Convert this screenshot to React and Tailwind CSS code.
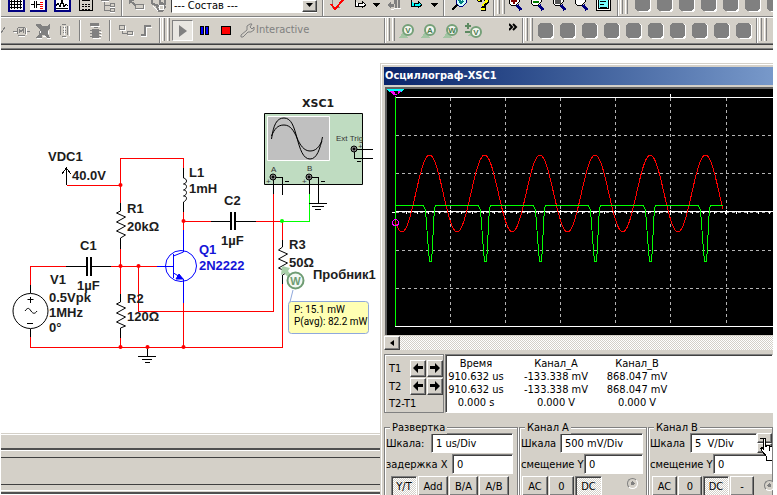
import { useState } from "react";

const raised = "border border-t-white border-l-white border-r-[#404040] border-b-[#404040] bg-[#d4d0c8] shadow-[inset_-1px_-1px_0_#808080]";
const sunken = "border border-t-[#808080] border-l-[#808080] border-r-white border-b-white shadow-[inset_1px_1px_0_#404040]";
const dither = "bg-[repeating-conic-gradient(#ffffff_0_25%,#d4d0c8_0_50%)] bg-[length:2px_2px]";

function Icon({ w = 16, className = "", children }) {
  return (
    <svg width={w} height="16" viewBox={`0 0 ${w} 16`} shapeRendering="crispEdges" fill="none" className={`shrink-0 ${className}`}>
      {children}
    </svg>
  );
}

function Separator({ className = "" }) {
  return <div className={`w-[2px] shrink-0 self-stretch border-l border-[#808080] bg-white ${className}`} />;
}

function Grip({ className = "" }) {
  return (
    <div className={`flex shrink-0 gap-[2px] self-stretch pb-[2px] ${className}`}>
      <div className="w-[3px] border-x border-l-white border-r-[#808080]" />
      <div className="w-[3px] border-x border-l-white border-r-[#808080]" />
    </div>
  );
}

function Blank({ cut }) {
  return (
    <Icon>
      <g transform={cut ? "translate(0 -4)" : ""}>
        <path d="M3 1h11l2 2v11l-2 2H4z" fill="#fff" />
        <path d="M2 0h11v1h1v1h1v11h-1v1h-1v1H2v-1H1v-1H0V2h1V1h1z" fill="#808080" />
      </g>
    </Icon>
  );
}

function Lens({ sign, color = "#800000" }) {
  return (
    <Icon>
      <path d="M1 0v3l2 2h5l3-3V0" fill="#fff" stroke="#000" />
      <path d="M9 5l4 5" stroke="#000080" strokeWidth="3" />
      <path d={sign} stroke={color} strokeWidth="2" />
    </Icon>
  );
}

function ProbeIcon({ letter }) {
  return (
    <Icon w={17}>
      <path d="M5 8L0 15h9z" fill="#a3c5a3" />
      <circle cx="9" cy="7" r="5" fill="#f4f6f0" stroke="#75a078" strokeWidth="2" shapeRendering="auto" />
      <text x="9" y="10" textAnchor="middle" className="fill-[#4a7a4e] font-['Liberation_Sans'] text-[8px] font-bold">{letter}</text>
    </Icon>
  );
}

function UpperToolbar() {
  return (
    <div className="flex h-[16px] items-start overflow-hidden">
      <Icon w={18} className="ml-[6px]">
        <path d="M1 0h16v11H1z" fill="#fff" />
        <path d="M1.500 0v10.500h15V0" stroke="#000080" strokeWidth="2" />
        <path d="M3 1.500h12M3 4.500h12M3 7.500h12M4.500 0v9M7.500 0v9M10.500 0v9M13.500 0v9" stroke="#000" />
      </Icon>
      <Icon w={18} className="ml-[4px]">
        <path d="M1 0h15v11H1z" fill="#fff" />
        <path d="M1 10.500h15.500V0" stroke="#000080" strokeWidth="2" />
        <path d="M2 4.500h3M8 4.500h3M5.500 1v7M7.500 1v7" stroke="#000" />
        <path d="M11 2h3M11 4h3M11 6h3M11 8h3" stroke="#f00" />
      </Icon>
      <Icon w={18} className="ml-[6px]">
        <path d="M1 0h15v11H1z" fill="#fff" />
        <path d="M1.500 0v10.500h15V0" stroke="#000080" strokeWidth="2" />
        <path d="M3 6l2-3 2 4 2-7 2 7 2-3 2 2M3 8.500h12" stroke="#000" />
      </Icon>
      <Icon className="ml-[7px]">
        <path d="M1.500 0v10.500h13V0" fill="#d4d0c8" stroke="#000" strokeWidth="1" />
        <path d="M4 0.500h8" stroke="#000" />
        <path d="M4 4h9M4 6.500h9M4 9h9" stroke="#000" strokeDasharray="2 1" />
      </Icon>
      <Icon className="ml-[6px]">
        <path d="M1 0.500h8M4.500 0v10h5M4 5.500h6M10 3.500h4v3h-4zM10 8.500h4v3h-4z" stroke="#808080" />
        <path d="M2 1.500h7M10 7.500h5M10 12.500h5" stroke="#fff" />
      </Icon>
      <Separator className="ml-[5px]" />
      <Icon className="ml-[6px]">
        <path d="M0 0l6 5M0 4V0h5" stroke="#808080" strokeWidth="2" />
        <path d="M6.500 4.500h8v4h-8z" stroke="#808080" />
        <path d="M7 9.500h8.500V5" stroke="#fff" />
      </Icon>
      <Icon className="ml-[6px]" w={17}>
        <path d="M1 0v3l3 2h3M9 0v3l5 1V0M6 7l4-3 4 3-3 4H8z" stroke="#808080" strokeWidth="2" />
        <path d="M8 5h4v4H8zM2 6l5 5" stroke="#fff" />
      </Icon>
      <div className="ml-[3px] flex h-[13px] w-[146px] shrink-0 border-b border-l border-b-white border-l-[#404040] bg-white">
        <select aria-label="Состав" className="h-[10px] flex-1 appearance-none bg-white pl-[2px] font-['DejaVu_Sans_Condensed'] text-[11px] leading-[9px]">
          <option>--- Состав ---</option>
        </select>
        <div className={`flex h-[12px] w-[15px] justify-center ${raised}`}>
          <svg width="7" height="4" viewBox="0 0 7 4" className="mt-[2px]"><path d="M0 0h7L3.500 4z" /></svg>
        </div>
      </div>
      <Separator className="ml-[5px]" />
      <Icon className="ml-[6px]">
        <path d="M2 0v7h8" stroke="#808080" />
        <path d="M1 4l4 5L13 0" stroke="#f00" strokeWidth="2" />
      </Icon>
      <Icon w={14} className="ml-[8px]">
        <path d="M1.500 0v6.500h4M4 3.500h4V1l4 4-4 3V6H4z" fill="#fff" stroke="#000" />
      </Icon>
      <Icon w={8} className="ml-[5px]"><path d="M0 3h7L3.500 7z" fill="#000" /></Icon>
      <Icon w={14} className="ml-[6px]">
        <path d="M0 5l4-4v3h3v3H4v2zM7 0h3v8H8zM11 0h2v8h-2z" fill="#808080" />
        <path d="M4 9.500l7-1h3V0" stroke="#fff" />
      </Icon>
      <Icon w={14} className="ml-[9px]">
        <path d="M1.500 0v6.500h4M4 3.500h4V1l4 4-4 3V6H4z" fill="#0ff" stroke="#000" />
      </Icon>
      <Icon w={8} className="ml-[7px]"><path d="M0 3h7L3.500 7z" fill="#000" /></Icon>
      <Separator className="ml-[4px]" />
      <Icon className="ml-[6px]">
        <path d="M5 0v3l3 3h4l3-3V0" fill="#cff" stroke="#000080" />
        <path d="M6 5l-5 5" stroke="#000" strokeWidth="2" />
        <path d="M8 0l2 3 2-2" stroke="#008080" strokeWidth="2" />
      </Icon>
      <Icon w={14} className="ml-[9px]">
        <path d="M1 0h5v2H2zM8 0h5v3l-3 2v2H6V4l3-2zM5 7h5v4H5z" fill="#000" />
        <path d="M2 0h2v1H2zM9 0h3v2L8 4v2H6V4l3-2zM5 8h4v2H5z" fill="#ffff00" />
      </Icon>
      <Separator className="ml-[3px]" />
      <Grip className="ml-[2px]" />
      <div className="ml-[3px] flex gap-[6px]">
        <Lens sign="M3 1h6M6 0v4" />
        <Lens sign="M3 2h6" color="#008000" />
        <Lens sign="M4 1h4v2H4z" color="#555" />
        <Lens sign="" />
        <Icon>
          <path d="M0.500 0v10.500h14V0" fill="#fff" stroke="#000" />
          <path d="M3 0h9v8H3z" fill="#7ff" />
          <path d="M4 1.500h6M4 4.500h4M4 7.500h7M2.500 0v8.500h10V0" stroke="#000" />
        </Icon>
      </div>
      <Separator className="ml-[5px]" />
      <Grip className="ml-[1px]" />
      <div className="ml-[7px] flex gap-[6px]">
        {[1, 2, 3, 4, 5, 6, 7].map((n) => <Blank key={n} cut />)}
      </div>
    </div>
  );
}

function LowerToolbar({ running, setRunning }) {
  return (
    <div className="flex h-[25px] items-center overflow-hidden">
      <Icon w={5}><path d="M0 10l4-6" stroke="#808080" /></Icon>
      <Icon w={18} className="ml-[7px]">
        <path d="M0 8.500h4M13 8.500h4M5 4h7M5 12h7M4.500 5v6M12.500 5v6M6 10V6l2 3 2-3v4" stroke="#808080" />
        <path d="M1 9.500h3M6 13.500h6M13.500 5v7" stroke="#fff" />
      </Icon>
      <Icon w={17} className="ml-[4px]">
        <path d="M1 1h4l2 2h5l3-2v4l-2 2v4l2 4h-3l-2-3H7v3H1l3-4 1-5-4-3z" fill="#808080" />
        <path d="M2 15.500h5M8 13.500h3M12 15.500h4M13.500 8v3M5 8v2" stroke="#fff" />
      </Icon>
      <Icon w={12} className="ml-[7px]">
        <path d="M3 1.500h4M1.500 3v9M8.500 3v9M3 13.500h4M4 4.500h3M4 7h3M4 9.500h3" stroke="#808080" />
        <path d="M10 3v10M4 14.500h4M5.500 3v9" stroke="#fff" />
      </Icon>
      <Separator className="my-[2px] ml-[8px]" />
      <Icon w={14} className="ml-[8px]">
        <path d="M1 0h9v3H1zM3 6h7v9H3zM1 7h11v1H1zM1 10h11v1H1zM1 13h11v1H1zM5 4h4v1H5z" fill="#808080" />
        <path d="M2 3.500h9M11 9h2M11 12h2M4 15.500h8" stroke="#fff" />
      </Icon>
      <Separator className="my-[2px] ml-[6px]" />
      <Icon className="ml-[8px]" w={15}>
        <path d="M0.500 2.500h5v4h-5zM8.500 8.500h5v3h-5zM3.500 7v3h4" stroke="#808080" />
        <path d="M1 7.500h5.500V3M9 12.500h5.500V9" stroke="#fff" />
      </Icon>
      <Icon className="ml-[7px]" w={14}>
        <path d="M0 12h4V3h6" stroke="#808080" strokeWidth="2" />
        <path d="M0 13.500h5.500V4.500H11" stroke="#fff" />
      </Icon>
      <Separator className="ml-[4px]" />
      <Grip className="ml-[1px]" />
      <button
        aria-label="Run"
        onClick={() => setRunning(true)}
        className="ml-[2px] flex h-[21px] w-[21px] shrink-0 items-center justify-center border border-t-[#808080] border-l-[#808080] border-r-white border-b-white bg-[#e8e6e1]"
      >
        <svg width="8" height="12" viewBox="0 0 8 12"><path d="M0 0l8 6-8 6z" fill="#808080" /></svg>
      </button>
      <button aria-label="Pause" onClick={() => setRunning(!running)} className="ml-[7px] flex shrink-0 gap-px">
        <span className="h-[9px] w-[4px] border border-black bg-[#0000ff]" />
        <span className="h-[9px] w-[4px] border border-black bg-[#0000ff]" />
      </button>
      <button aria-label="Stop" onClick={() => setRunning(false)} className="ml-[12px] h-[9px] w-[10px] shrink-0 border border-black bg-[#ff0000]" />
      <Icon w={15} className="ml-[9px]">
        <path d="M1 12l6-5V3l3-2h2L10 4l2 2 2-2v3l-3 2H8l-5 5H1z" stroke="#808080" shapeRendering="auto" />
      </Icon>
      <span className="w-[129px] shrink-0 pl-px font-['DejaVu_Sans_Condensed'] text-[11px] text-[#808080]">Interactive</span>
      <Separator />
      <Grip className="ml-[1px]" />
      <div className="ml-[4px] flex gap-[5px]">
        <ProbeIcon letter="V" />
        <ProbeIcon letter="A" />
        <ProbeIcon letter="W" />
        <Icon w={19}>
          <path d="M0 3h6M3 0v6M0 9h5" stroke="#5d8a61" strokeWidth="2" />
          <path d="M7 8l-5 5h7z" fill="#a3c5a3" />
          <circle cx="11" cy="9" r="5" fill="#f4f6f0" stroke="#75a078" strokeWidth="2" shapeRendering="auto" />
          <text x="11" y="12" textAnchor="middle" className="fill-[#4a7a4e] font-['Liberation_Sans'] text-[8px] font-bold">V</text>
        </Icon>
      </div>
      <Icon w={9} className="ml-[25px] self-start">
        <path d="M0 6l3 3-3 3M4 6l3 3-3 3" stroke="#000" strokeWidth="2" shapeRendering="auto" />
      </Icon>
      <Separator className="ml-[4px]" />
      <Grip className="ml-[1px]" />
      <div className="ml-[5px] flex gap-[6px]">
        {[1, 2, 3, 4, 5, 6, 7, 8, 9, 10].map((n) => <Blank key={n} />)}
      </div>
      <Separator className="ml-[4px]" />
      <Grip className="ml-[1px]" />
      <Icon w={8} className="ml-[6px]"><path d="M0 0h8v2H2v14" stroke="#808080" strokeWidth="2" /></Icon>
    </div>
  );
}

function Label({ x, y, blue, children }) {
  return (
    <text x={x} y={y} className={`font-['Liberation_Sans'] text-[13px] font-bold ${blue ? "fill-[#1414d8]" : "fill-[#1c1c1c]"}`}>
      {children}
    </text>
  );
}

function Terminal({ x, y }) {
  return (
    <g shapeRendering="auto">
      <circle cx={x} cy={y} r="3" fill="#888" stroke="#000" />
      <circle cx={x} cy={y} r="1" fill="#000" stroke="#000" />
    </g>
  );
}

function Schematic() {
  return (
    <svg width="380" height="383" viewBox="0 50 380 383" fill="none" className="block shrink-0">
      {/* instrument body */}
      <path d="M264.500 113.500h98v71h-98z" fill="#bfdcc1" stroke="#000" />
      <path d="M267.500 116.500h62v44h-62z" fill="#c0c0c0" stroke="#fff" />
      <path d="M271.500 139c2-14 5-21 12.500-21s10 9 13 20 6 21 13 21 10-10 12.500-22" stroke="#000" />
      <path d="M271.500 136c3-7 6-11 12.500-11s10 6 13 13 7 13 13 13 9-4 12-10" stroke="#000" />
      <g className="fill-[#333] font-['Liberation_Sans'] text-[8px]">
        <text x="336" y="141">Ext Trig</text>
        <text x="271" y="172">A</text>
        <text x="307" y="171">B</text>
        <text x="266" y="184">+</text>
        <text x="302" y="184">+</text>
        <text x="358" y="149">+</text>
      </g>

      <g shapeRendering="crispEdges">
        {/* wires */}
        <path
          stroke="#ff0000"
          d="M66.500 185.500H120.500M120.500 203V158.500H183.500V169M183.500 212V230M183.500 221.500H211M256 221.500H282.500V240M282.500 284V347.500H30.500V337M30.500 285V266.500H66M111 266.500H158M120.500 248V294M120.500 338V347M138.500 266V311.500H273.500V194M183.500 303V347"
        />
        <path stroke="#00ff00" d="M282 221.500H309.500V194" />
        {/* component leads */}
        <path
          stroke="#000"
          d="M66.500 185V168M62 174l4.500-6 4.500 6M120.500 203V211M120.500 238V249M120.500 294V302M120.500 328V338M183.500 168V178M183.500 202V212M66 266.500H86M92 266.500H111M211 221.500H230M236 221.500H256M282.500 240V247M282.500 275V284M30.500 285V293M30.500 329V337M147.500 348V356M138 356.500H156M142 359.500H152M145 362.500H150M273.500 194V177.500H282.500V195M309.500 194V177.500H318.500V203M309 203.500H327M312 206.500H324M315 209.500H321M354 149.500H373M354.500 149V158.500H373M285 181.500H289M321 181.500H325M357 161.500H361"
        />
        <path stroke="#000" strokeWidth="2" d="M87 257V276M91 257V276M231 212V230M235 212V230" />
      </g>

      <path
        stroke="#000"
        d="M120.500 211l-4 2 9 4-9 5 9 4-9 5 9 4-5 3M120.500 302l-4 2 9 4-9 5 9 4-9 5 9 4-5 2M282.500 247l-4 3 9 4-9 5 9 4-9 5 9 4-5 3M183.500 178c4 1 4 5 0 6 4 0 4 5 0 6 4 0 4 5 0 6 4 0 4 4 0 6"
      />

      {/* source */}
      <circle cx="30.500" cy="311" r="17.500" stroke="#000" />
      <path d="M27.500 299.500h6M30.500 297v6M27 323.500h6M25 311c3-4 4-3 6 0s4 3 6 0" stroke="#000" />

      {/* transistor */}
      <g stroke="#0000ff">
        <circle cx="181" cy="266" r="15.500" />
        <path shapeRendering="crispEdges" d="M157 266.500h16M173.500 254v24M183.500 230v22M183.500 279v24" />
        <path d="M183.500 252l-10 4M173.500 273l10 6" />
        <path d="M176 279l3-5 4 5z" fill="#0000ff" />
      </g>

      <g fill="#ff0000">
        <circle cx="120.500" cy="185" r="2" />
        <circle cx="183.500" cy="221" r="2" />
        <circle cx="120.500" cy="266" r="2" />
        <circle cx="138.500" cy="266" r="2" />
        <circle cx="120.500" cy="347" r="2" />
        <circle cx="147.500" cy="347" r="2" />
        <circle cx="183.500" cy="347" r="2" />
      </g>
      <circle cx="282" cy="221" r="2" fill="#00ff00" />
      <Terminal x={273} y={177} />
      <Terminal x={309} y={177} />
      <Terminal x={354} y={149} />

      <text x="302" y="107" className="fill-[#1c1c1c] font-['DejaVu_Sans'] text-[11px] font-bold">XSC1</text>
      <Label x="48" y="161">VDC1</Label>
      <Label x="72" y="180">40.0V</Label>
      <Label x="189" y="177">L1</Label>
      <Label x="189" y="193">1mH</Label>
      <Label x="127" y="213">R1</Label>
      <Label x="127" y="231">20kΩ</Label>
      <Label x="224" y="205">C2</Label>
      <Label x="221" y="245">1µF</Label>
      <Label x="80" y="250">C1</Label>
      <Label x="77" y="290">1µF</Label>
      <Label x="50" y="284">V1</Label>
      <Label x="49" y="302">0.5Vpk</Label>
      <Label x="49" y="317">1MHz</Label>
      <Label x="49" y="332">0°</Label>
      <Label x="127" y="303">R2</Label>
      <Label x="127" y="321">120Ω</Label>
      <Label x="199" y="254" blue>Q1</Label>
      <Label x="199" y="270" blue>2N2222</Label>
      <Label x="289" y="249">R3</Label>
      <Label x="289" y="267">50Ω</Label>
      <Label x="313" y="279">Пробник1</Label>

      {/* probe and its readout */}
      <path d="M282 266l8 2-2 3 4 5-3 2-5-5-3 2z" fill="#a8cfa8" />
      <circle cx="295.500" cy="280.500" r="8" fill="#f4f8f4" stroke="#6f9c73" strokeWidth="2" />
      <text x="295.500" y="285" textAnchor="middle" className="fill-[#6f9c73] font-['Liberation_Sans'] text-[11px] font-bold">W</text>
      <path d="M293 290l-3 12" stroke="#8fa8dc" />
      <rect x="288.500" y="301.500" width="80" height="32" rx="3" fill="#ffffb3" stroke="#8fa8dc" />
      <g className="fill-black font-['Roboto'] text-[10px]">
        <text x="294" y="313">P: 15.1 mW</text>
        <text x="294" y="325">P(avg): 82.2 mW</text>
      </g>
    </svg>
  );
}

const dips = [430.5, 485.5, 540.5, 595.5, 650.5, 705.5];
const columns = [450.5, 505.5, 560.5, 615.5, 670.5, 726.5];

const sine = Array.from({ length: 329 }, (_, i) => {
  const x = 395 + i;
  const y = 193.5 - 38.5 * Math.cos((2 * Math.PI * (x - 429.5)) / 55.2);
  return `${x},${y.toFixed(1)}`;
}).join(" ");

const pulses =
  "M395 205.500" +
  dips.map((x) => `H${x - 7}L${x - 5} 210 ${x - 3} 237 ${x - 2} 250 ${x - 1} 261H${x + 1}L${x + 2} 247 ${x + 3} 224 ${x + 4} 208 ${x + 5} 205.500`).join("") +
  "H723";

function Plot() {
  return (
    <div className="h-[248px] overflow-hidden border-t-2 border-l-2 border-[#606060] bg-black">
      <svg width="387" height="246" viewBox="387 89 387 246" fill="none" shapeRendering="crispEdges" className="block">
        <path
          stroke="#b4b4b4"
          strokeDasharray="3 3"
          d={columns.map((x) => `M${x} 98V326`).join("") + "M396 135.500H771M396 173.500H771M396 212.500H771M396 250.500H771M396 288.500H771"}
        />
        <path stroke="#fff" d="M395 97.500H774M395 326.500H774M395 211.500H774M392 212.500H396M670.500 94V98" />
        <path stroke="#fff" strokeWidth="2" strokeDasharray="1 10" d="M406 213H773" />
        <path stroke="#fff" d={columns.map((x) => `M${x} 210V215`).join("")} />
        <path stroke="#00ff00" d="M395.500 97V326" />
        <polyline points={sine} stroke="#ff0000" />
        <path d={pulses} stroke="#00ff00" />
        <path d="M387 89h17l-2 3h-13z" fill="#00ffff" />
        <path d="M389 91h13l-6.500 6z" fill="#ff00ff" />
        <path d="M394 91h3v1h-2v1h2v2h-3" stroke="#000" />
        <circle cx="395.500" cy="222.500" r="3" stroke="#ff00ff" />
      </svg>
    </div>
  );
}

function Field({ id, label, value, className, children }) {
  const [text, setText] = useState(value);
  return (
    <div className="flex items-center">
      <label htmlFor={id} className="flex-1 whitespace-nowrap">{label}</label>
      <input
        id={id}
        value={text}
        onChange={(e) => setText(e.target.value)}
        className={`h-[20px] min-w-0 bg-white pl-[4px] outline-none ${sunken} ${className}`}
      />
      {children}
    </div>
  );
}

function Modes({ items, active, className = "" }) {
  const [mode, setMode] = useState(active);
  return (
    <div className={`flex gap-px ${className}`}>
      {items.map(({ name, width }) => (
        <button key={name} onClick={() => setMode(name)} className={`h-[20px] text-center ${width} ${mode === name ? `${sunken} ${dither}` : raised}`}>
          {name}
        </button>
      ))}
    </div>
  );
}

function Group({ title, className, children }) {
  return (
    <fieldset className={`relative border border-[#808080] pl-px shadow-[inset_1px_1px_0_#fff,1px_1px_0_#fff] ${className}`}>
      <legend className="absolute top-[-7px] left-[5px] bg-[#d4d0c8] px-[2px] leading-[13px]">{title}</legend>
      {children}
    </fieldset>
  );
}

function Radio({ label, className }) {
  return (
    <input
      type="radio"
      aria-label={label}
      defaultChecked
      className={`h-[11px] w-[11px] shrink-0 appearance-none rounded-full border border-t-[#808080] border-l-[#808080] border-r-white border-b-white bg-[radial-gradient(#808080_0_2px,#d4d0c8_2px)] ${className}`}
    />
  );
}

function Arrow({ left }) {
  return (
    <button aria-label={left ? "Left" : "Right"} className={`flex h-[17px] w-[16px] items-center justify-center ${raised}`}>
      <svg width="10" height="10" viewBox="0 0 10 10">
        <path d={left ? "M0 5l5-5v3h5v3H5v4z" : "M10 5L5 0v3H0v3h5v4z"} />
      </svg>
    </button>
  );
}

const rows = [
  ["910.632 us", "-133.338 mV", "868.047 mV"],
  ["910.632 us", "-133.338 mV", "868.047 mV"],
  ["0.000 s", "0.000 V", "0.000 V"],
];

function Oscilloscope() {
  return (
    <section className="mt-[13px] flex min-w-0 flex-1 flex-col overflow-hidden border-t border-l border-[#d4d0c8] bg-[#d4d0c8] font-['DejaVu_Sans_Condensed'] text-[11px] leading-[13px] text-black">
      <div className="flex flex-1 flex-col border-t border-l border-white pt-[2px] pl-[2px]">
        <h1 className="h-[18px] bg-linear-to-r from-[#0a246a] to-[#7899ca] pl-px font-['DejaVu_Sans_Condensed'] text-[11px] leading-[18px] font-bold text-white">
          Осциллограф-XSC1
        </h1>
        <div className="mt-[2px] ml-px">
          <Plot />
        </div>
        <div className={`mt-px flex h-[14px] ${dither}`}>
          <button aria-label="Scroll left" className={`flex w-[16px] items-center justify-center ${raised}`}>
            <svg width="4" height="6" viewBox="0 0 4 6"><path d="M4 0v6L0 3z" /></svg>
          </button>
        </div>

        <div className="mt-[4px] flex h-[59px] gap-px">
          <div className="grid w-[60px] shrink-0 grid-cols-[20px_16px_16px] grid-rows-[18px_18px_16px] items-center gap-x-px border border-[#808080] pt-[4px] pl-[4px] shadow-[inset_1px_1px_0_#fff]">
            <span>T1</span>
            <Arrow left />
            <Arrow />
            <span>T2</span>
            <Arrow left />
            <Arrow />
            <span className="col-span-3">T2-T1</span>
          </div>
          <div className={`min-w-0 flex-1 bg-white pt-px ${sunken}`}>
            <table className="text-center">
              <thead>
                <tr>
                  <th className="w-[60px] p-0 pt-px font-normal">Время</th>
                  <th className="w-[100px] p-0 pt-px font-normal">Канал_A</th>
                  <th className="w-[62px] p-0 pt-px font-normal">Канал_B</th>
                </tr>
              </thead>
              <tbody>
                {rows.map((row, i) => (
                  <tr key={i}>
                    {row.map((cell, j) => <td key={j} className="p-0 whitespace-nowrap">{cell}</td>)}
                  </tr>
                ))}
              </tbody>
            </table>
          </div>
        </div>

        <div className="mt-[14px] flex flex-1">
          <Group title="Развертка" className="w-[134px] shrink-0 pt-[5px]">
            <div className="flex flex-col gap-px pr-[4px]">
              <Field id="scale-x" label="Шкала:" value="1 us/Div" className="w-[82px]" />
              <Field id="delay-x" label="задержка X" value="0" className="w-[61px]" />
            </div>
            <Modes
              className="mt-[2px] ml-[5px]"
              active="Y/T"
              items={[
                { name: "Y/T", width: "w-[26px]" },
                { name: "Add", width: "w-[30px]" },
                { name: "B/A", width: "w-[29px]" },
                { name: "A/B", width: "w-[30px]" },
              ]}
            />
          </Group>
          <Group title="Канал A" className="ml-px w-[128px] shrink-0 pt-[5px]">
            <div className="flex flex-col gap-px pr-[3px]">
              <Field id="scale-a" label="Шкала" value="500 mV/Div" className="w-[83px]" />
              <Field id="offset-a" label="смещение Y" value="0" className="w-[59px]" />
            </div>
            <div className="mt-[2px] ml-px flex">
              <Modes
                active="DC"
                items={[
                  { name: "AC", width: "w-[26px]" },
                  { name: "0", width: "w-[25px]" },
                  { name: "DC", width: "w-[27px]" },
                ]}
              />
              <Radio label="Канал A" className="mt-[2px] ml-[25px]" />
            </div>
          </Group>
          <Group title="Канал B" className="ml-px min-w-0 flex-1 pt-[5px]">
            <div className="flex flex-col gap-px">
              <div className="relative">
                <Field id="scale-b" label="Шкала" value="5  V/Div" className="w-[67px]">
                  <div className="flex w-[15px] flex-col">
                    <button aria-label="Up" className={`h-[10px] ${raised}`} />
                    <button aria-label="Down" className={`h-[10px] ${raised}`} />
                  </div>
                </Field>
                {/* pointer over the spinner */}
                <svg width="12" height="25" viewBox="0 0 12 25" className="absolute top-[4px] right-0" shapeRendering="crispEdges">
                  <path d="M3.500 1.500h2v8h1v-1h3v1h3v14h-6v-4l-4-5-2-3 2-1 1 2z" fill="#fff" stroke="#000" />
                  <path d="M9.500 9v5M0 1.500h3" stroke="#000" />
                </svg>
              </div>
              <Field id="offset-b" label="смещение Y" value="0" className="w-[59px]" />
            </div>
            <div className="mt-[2px] ml-[2px] flex">
              <Modes
                active="DC"
                items={[
                  { name: "AC", width: "w-[25px]" },
                  { name: "0", width: "w-[24px]" },
                  { name: "DC", width: "w-[26px]" },
                  { name: "-", width: "w-[24px]" },
                ]}
              />
              <Radio label="Канал B" className="mt-[4px] ml-[10px]" />
            </div>
          </Group>
        </div>
      </div>
    </section>
  );
}

export default function App() {
  const [running, setRunning] = useState(true);

  return (
    <div className="flex h-screen flex-col overflow-hidden bg-white pr-[4px] pl-px">
      <header className="shrink-0 bg-[#d4d0c8]">
        <UpperToolbar />
        <div className="h-[2px] border-t border-[#808080] bg-white" />
        <LowerToolbar running={running} setRunning={setRunning} />
        <div className="h-[2px] border-t border-[#808080] bg-[#404040]" />
        <div className="h-[3px]" />
        <div className="h-[2px] border-t border-[#808080] bg-[#404040]" />
      </header>
      <main className="flex min-h-0 flex-1">
        <div className="flex w-[379px] shrink-0 flex-col overflow-hidden pb-px">
          <div className="-ml-px">
            <Schematic />
          </div>
          <div className="border-t border-[#d4d0c8]">
            <div className="h-[16px] border-t border-b-2 border-t-white border-b-[#505050] bg-[#d4d0c8]" />
          </div>
          <div className="mt-px h-[6px] bg-[#d4d0c8]" />
          <div className="h-[29px] border-y border-[#404040] bg-[#d4d0c8]" />
          <div className="h-[5px] bg-[#d4d0c8]" />
          <div className="mt-px h-[3px] border-b-2 border-[#505050] bg-[#d4d0c8]" />
        </div>
        <Oscilloscope />
      </main>
    </div>
  );
}
